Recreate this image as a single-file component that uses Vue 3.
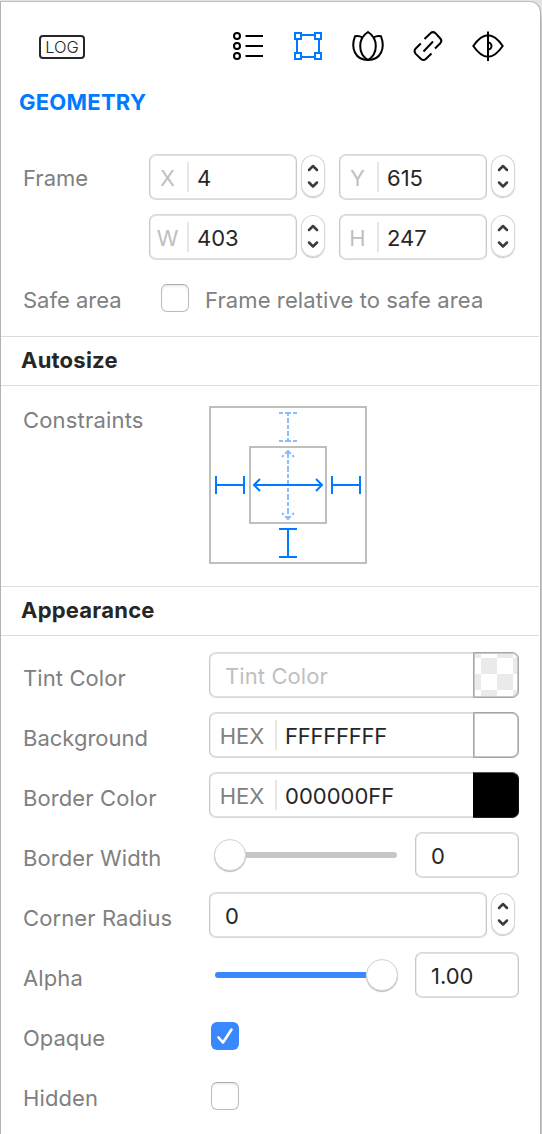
<script setup>
const frameRows = [
  [{ key: 'X', value: '4' }, { key: 'Y', value: '615' }],
  [{ key: 'W', value: '403' }, { key: 'H', value: '247' }],
]
const colors = [
  { label: 'Tint Color', cls: 't-tint', value: '', swatch: 'checker' },
  { label: 'Background', cls: 't-bg', value: 'FFFFFFFF', swatch: 'white' },
  { label: 'Border Color', cls: 't-bc', value: '000000FF', swatch: 'black' },
]
</script>

<template>
  <div class="window">
    <main class="panel">
      <header class="toolbar">
        <span class="log">LOG</span>
        <nav class="tabs">
          <svg width="34" height="34" viewBox="0 0 34 34" class="ico">
            <g stroke-width="2">
              <circle cx="6" cy="7" r="3" /><circle cx="6" cy="17" r="3" /><circle cx="6" cy="27" r="3" />
              <path d="M14.500 7H32M14.500 17H32M14.500 27H32" />
            </g>
          </svg>
          <svg width="34" height="34" viewBox="0 0 34 34" class="ico blue">
            <path d="M10 6H24M10 28H24M6 10V24M28 10V24" stroke-width="2" />
            <path d="M4 4H10V10H4zM24 4H30V10H24zM4 24H10V30H4zM24 24H30V30H24z" stroke-width="2" />
          </svg>
          <svg width="34" height="34" viewBox="0 0 34 34" class="ico">
            <path d="M17 3C11.500 6.500 9.200 11.500 9.200 17C9.200 22.500 12 28 17 31C22 28 24.800 22.500 24.800 17C24.800 11.500 22.500 6.500 17 3z" />
            <path d="M11.500 8.500Q8 6.500 4 7.300C-0.500 19 4 31 17 31C30 31 34.500 19 30 7.300Q26 6.500 22.500 8.500" />
          </svg>
          <svg width="34" height="34" viewBox="0 0 34 34" class="ico">
            <path d="M12.500 22.500L22 12.500M13.500 10L19.500 4.200Q22 2 24.500 4.200L29.300 9.500Q31.500 12 29.300 14.200L24 19.500M20.500 24.500L14.800 30Q12.500 32 10 30L4.500 24.600Q2.500 22 4.500 19.700L9.800 14.500" />
          </svg>
          <svg width="34" height="34" viewBox="0 0 34 34" class="ico">
            <path d="M2.300 17Q17-4.500 31.700 17Q17 38.500 2.300 17zM17 2.500V32M17 13.500A3.500 3.500 0 0 1 17 20.500" />
          </svg>
        </nav>
      </header>

      <h1><span class="t-geo">GEOMETRY</span></h1>

      <section class="geometry">
        <div class="frames">
          <span class="label t-frame">Frame</span>
          <div class="grid">
            <template v-for="(row, r) in frameRows" :key="r">
              <div v-for="f in row" :key="f.key" class="coord">
                <div class="field"><span class="axis">{{ f.key }}</span><span class="value">{{ f.value }}</span></div>
                <svg class="stepper" viewBox="0 0 24 42"><path d="M8 15L12 11L16 15M8 27.500L12 31.500L16 27.500" /></svg>
              </div>
            </template>
          </div>
        </div>
        <div class="safe">
          <span class="label t-safe">Safe area</span>
          <span class="check"></span>
          <span class="label t-rel">Frame relative to safe area</span>
        </div>
      </section>

      <h2><span class="t-auto">Autosize</span></h2>
      <section class="autosize">
        <span class="label t-con">Constraints</span>
        <svg class="constraints" width="158" height="158" viewBox="0 0 158 158">
          <path d="M1 1H157V157H1zM41 41H117V117H41z" stroke="#bfbfbf" />
          <g stroke="#8cbcff">
            <path d="M70 7H74M76 7H82M84 7H88M70 35H74M76 35H82M84 35H88" />
            <path d="M79 7V10M79 12V17M79 19V23M79 25V30M79 32V35" />
            <path d="M79 46V112" stroke-dasharray="6 2 4 2" />
            <path d="M73 51L79 45L85 51M73 107L79 113L85 107" stroke-dasharray="2.500 2 8 2 2.500" />
          </g>
          <g stroke="#007aff">
            <path d="M7 70V88M7 79H35M35 70V88M123 70V88M123 79H151M151 70V88M70 123H88M79 123V151M70 151H88M46 79H112" />
            <path d="M51 73L45 79L51 85M107 73L113 79L107 85" />
          </g>
        </svg>
      </section>

      <h2><span class="t-app">Appearance</span></h2>
      <section class="appearance">
        <div v-for="c in colors" :key="c.label" class="row">
          <span class="label" :class="c.cls">{{ c.label }}</span>
          <div class="field color">
            <template v-if="c.value"><span class="axis hex">HEX</span><span class="value" :class="c.cls + '-v'">{{ c.value }}</span></template>
            <span v-else class="value placeholder">Tint Color</span>
            <i class="swatch" :class="c.swatch"></i>
          </div>
        </div>
        <div class="row">
          <span class="label t-bw">Border Width</span>
          <div class="slider"><i class="thumb"></i></div>
          <div class="field small"><span class="value pad">0</span></div>
        </div>
        <div class="row">
          <span class="label t-cr">Corner Radius</span>
          <div class="field radius"><span class="value pad">0</span></div>
          <svg class="stepper" viewBox="0 0 24 42"><path d="M8 15L12 11L16 15M8 27.500L12 31.500L16 27.500" /></svg>
        </div>
        <div class="row">
          <span class="label t-alpha">Alpha</span>
          <div class="slider full"><i class="thumb"></i></div>
          <div class="field small"><span class="value pad t-one">1.00</span></div>
        </div>
        <div class="row">
          <span class="label t-op">Opaque</span>
          <span class="check on"><svg width="28" height="28" viewBox="0 0 28 28"><path d="M7.500 15.500L12 20.500L20.500 7.500" /></svg></span>
        </div>
        <div class="row">
          <span class="label t-hid">Hidden</span>
          <span class="check"></span>
        </div>
      </section>
    </main>
  </div>
</template>

<style>
body { margin: 0; background: #e4e4e4; }
</style>

<style scoped>
* { box-sizing: border-box; }
.window {
  height: 1134px; width: 542px; padding-top: 1px; overflow: hidden;
  background: linear-gradient(#e4e4e4 12px, #c6c6c6 24px);
  font-family: Inter, "Liberation Sans", sans-serif; font-size: 22px; line-height: 26px; color: #262626;
}
.panel {
  width: 541px; height: 1140px; background: #fff; border: 1px solid #b2b2b2; border-top-color: #bcbcbc;
  border-radius: 0 11px 0 0;
}
span { white-space: nowrap; }
.toolbar { height: 80px; padding: 27px 35px 0 38px; display: flex; justify-content: space-between; align-items: flex-start; }
.log {
  margin-top: 6px; width: 46px; height: 24px; border: 2px solid #262626; border-radius: 4px;
  font-size: 16.500px; line-height: 21px; text-align: center; font-weight: 300;
}
.tabs { display: flex; gap: 26px; }
.ico { fill: none; stroke: #000; stroke-width: 2; display: block; }
.ico.blue { stroke: #007aff; }
h1 { margin: 0; height: 72px; padding: 7px 0 0 18px; font-size: 22px; line-height: 26px; color: #007aff; font-weight: 700; letter-spacing: 0.25px; }
.geometry { height: 182px; }
.label { color: #808080; letter-spacing: 0.1px; }
.t-safe, .t-op, .t-bg, .t-frame { letter-spacing: 0; }
.t-con { letter-spacing: 0.18px; }
.frames { display: flex; height: 106px; padding-left: 22px; }
.frames > .label { width: 126px; padding-top: 11px; }
.grid { display: grid; grid-template-columns: 190px 180px; grid-auto-rows: 46px; row-gap: 14px; }
.coord { display: flex; gap: 4px; }
.field {
  width: 148px; height: 46px; border: 1px solid #c8c8c8; border-top-color: #d8d8d8; border-bottom-color: #d8d8d8;
  border-radius: 7px; background: #fff; box-shadow: inset 0 1px #e2e2e2, inset 0 -1px #e2e2e2, inset 0 0 0 1px #eee;
  display: flex; align-items: center;
}
.axis {
  width: 39px; height: 30px; padding-right: 2px; border-right: 2px solid #e6e6e6; color: #bfbfbf; line-height: 32px; text-align: center;
}
.value { padding-left: 8px; padding-top: 1px; }
.stepper {
  width: 24px; height: 42px; margin-top: 1px; border-radius: 12px; flex: none;
  box-shadow: inset 0 0 0 1px #d6d6d6, 0 1px 1px #c4c4c4;
}
.stepper path { fill: none; stroke: #3c3c3c; stroke-width: 2.500; stroke-linecap: round; stroke-linejoin: round; }
.safe { display: flex; height: 76px; padding: 24px 0 0 22px; }
.safe .label { padding-top: 3px; }
.safe .t-safe { width: 138px; }
.check {
  width: 28px; height: 28px; border: 1px solid #bcbcbc; border-top-color: #a8a8a8; border-radius: 6px;
  box-shadow: inset 0 2px 2px #f0f0f0; flex: none;
}
.safe .check { margin-right: 16px; }
h2 {
  margin: 0 1px 0 0; height: 50px; border: solid #dcdcdc; border-width: 1px 0; padding: 10px 0 0 20px;
  font-size: 22px; line-height: 26px; font-weight: 700; letter-spacing: 0.22px;
}
.autosize { height: 200px; display: flex; padding: 20px 0 0 22px; }
.t-con { width: 186px; }
.constraints { fill: none; stroke-width: 2; }
.autosize .label { margin-top: 1px; }
.appearance { padding: 16px 0 0 22px; }
.row { height: 60px; display: flex; }
.row > .label { width: 186px; padding-top: 13px; }
.field.color { width: 310px; }
.hex { width: 67px; padding-right: 1px; color: #808080; }
.t-bg-v { letter-spacing: -0.25px; }
.placeholder { color: #bfbfbf; padding-left: 15px; letter-spacing: 0.1px; }
.pad { padding-left: 15px; }
.swatch { width: 46px; height: 46px; margin: 0 -1px 0 auto; border: 1px solid #a6a6a6; box-shadow: inset 0 0 0 1px #c8c8c8; border-radius: 0 7px 7px 0; flex: none; }
.black { background: #000; border-color: #555 #111 #222 #000; box-shadow: none; }
.checker { background: conic-gradient(#fff 25%, #eaeaea 0 50%, #fff 0 75%, #eaeaea 0) 7px 5px / 32px 32px; }
.slider { width: 182px; height: 6px; margin: 20px 18px 0 6px; border-radius: 3px; background: #c6c6c6; display: flex; align-items: center; }
.thumb { width: 32px; height: 32px; margin: 0 -1px; border-radius: 50%; background: #fff; flex: none; border: 1px solid #d4d4d4; box-shadow: 0 1px 1px #bdbdbd; }
.full { background: #3a88fe; justify-content: flex-end; }
.small { width: 104px; }
.radius { width: 278px; margin-right: 4px; }
.row .check { margin: 10px 0 0 2px; }
.check.on { border: 0; background: #3a88fe; box-shadow: none; }
.check path { fill: none; stroke: #fff; stroke-width: 2.600; stroke-linecap: round; stroke-linejoin: round; }
</style>
